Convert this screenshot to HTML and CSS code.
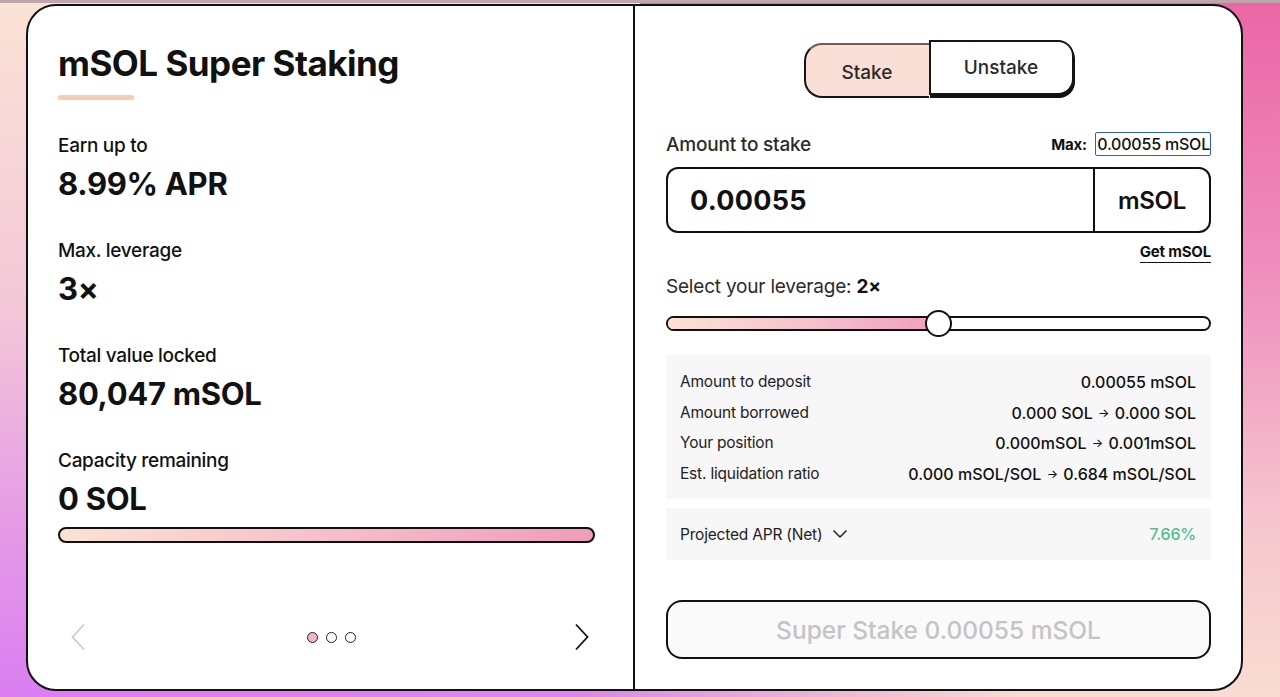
FILE: index.html
```html
<!DOCTYPE html>
<html lang="en">
<head>
  <meta charset="UTF-8">
  <title>mSOL Super Staking</title>
  <link rel="stylesheet" href="styles.css">
</head>
<body>
  <div class="card">
    <section class="info">
      <h1 class="title">mSOL Super Staking</h1>
      <div class="title-bar"></div>

      <div class="stat">
        <div class="stat-label">Earn up to</div>
        <div class="stat-value">8.99% APR</div>
      </div>
      <div class="stat">
        <div class="stat-label">Max. leverage</div>
        <div class="stat-value">3×</div>
      </div>
      <div class="stat">
        <div class="stat-label">Total value locked</div>
        <div class="stat-value">80,047 mSOL</div>
      </div>
      <div class="stat stat-last">
        <div class="stat-label">Capacity remaining</div>
        <div class="stat-value">0 SOL</div>
      </div>
      <div class="capacity"></div>

      <div class="pager">
        <svg class="chev chev-off" width="16" height="28" viewBox="0 0 16 28"><path d="M14 1.5 L2.5 14 L14 26.5" fill="none" stroke="currentColor" stroke-width="1.8"/></svg>
        <div class="dots">
          <span class="dot dot-on"></span>
          <span class="dot"></span>
          <span class="dot"></span>
        </div>
        <svg class="chev" width="16" height="28" viewBox="0 0 16 28"><path d="M2 1.5 L13.5 14 L2 26.5" fill="none" stroke="currentColor" stroke-width="1.8"/></svg>
      </div>
    </section>

    <section class="stake">
      <div class="toggle">
        <button class="tab tab-stake">Stake</button>
        <button class="tab tab-unstake">Unstake</button>
      </div>

      <div class="amount-head">
        <span>Amount to stake</span>
        <span class="max">Max: <span class="max-btn">0.00055 mSOL</span></span>
      </div>
      <div class="amount-box">
        <div class="amount-value">0.00055</div>
        <div class="amount-unit">mSOL</div>
      </div>
      <div class="get-row"><span class="get-link">Get mSOL</span></div>

      <div class="leverage">Select your leverage: <b>2×</b></div>
      <div class="slider">
        <div class="slider-fill" style="width: 50%;"></div>
        <div class="slider-thumb" style="left: 50%;"></div>
      </div>

      <div class="details">
        <div class="row"><span>Amount to deposit</span><span class="val">0.00055 mSOL</span></div>
        <div class="row"><span>Amount borrowed</span><span class="val">0.000 SOL <i>→</i> 0.000 SOL</span></div>
        <div class="row"><span>Your position</span><span class="val">0.000mSOL <i>→</i> 0.001mSOL</span></div>
        <div class="row"><span>Est. liquidation ratio</span><span class="val">0.000 mSOL/SOL <i>→</i> 0.684 mSOL/SOL</span></div>
      </div>

      <div class="apr">
        <span class="apr-label">Projected APR (Net)
          <svg width="16" height="10" viewBox="0 0 16 10"><path d="M1.5 1.5 L8 8 L14.5 1.5" fill="none" stroke="#222" stroke-width="1.5"/></svg>
        </span>
        <span class="apr-value">7.66%</span>
      </div>

      <button class="submit">Super Stake 0.00055 mSOL</button>
    </section>
  </div>
</body>
</html>
```

FILE: styles.css
```css
* {
  box-sizing: border-box;
}
body {
  margin: 0;
  padding: 4px 37px 6px 26px;
  height: 697px;
  overflow: hidden;
  font-family: "Inter", "Liberation Sans", sans-serif;
  color: #111;
  background:
    linear-gradient(#bfa6ad, #bfa6ad) top / 100% 3px no-repeat,
    linear-gradient(90deg, #da7ef2 0%, #dc86ea 45%, #eab0d8 62%, #f9dcd2 80%) bottom / 100% 8px no-repeat,
    linear-gradient(180deg, #fbe3d6 0%, #f3c6d8 45%, #e59be6 75%, #da7ef2 100%) left / 50% 100% no-repeat,
    linear-gradient(180deg, #eb66a6 0%, #ef8fbd 40%, #f6c6cf 75%, #f9dcd2 100%) right / 50% 100% no-repeat;
}
.card {
  height: 687px;
  background: #fff;
  border: 2px solid #111;
  border-radius: 30px;
  display: grid;
  grid-template-columns: 607px 1fr;
  grid-template-rows: 100%;
  overflow: hidden;
}

/* left column */
.info {
  border-right: 2px solid #111;
  padding: 36px 38px 32px 30px;
  display: flex;
  flex-direction: column;
}
.title {
  margin: 0;
  font-size: 35px;
  line-height: 42px;
  font-weight: 700;
  letter-spacing: -0.5px;
}
.title-bar {
  width: 76px;
  height: 5px;
  margin-top: 11px;
  border-radius: 3px;
  background: #f5cbbb;
}
.stat {
  margin-top: 34px;
}
.stat + .stat {
  margin-top: 37px;
}
.stat-label {
  font-size: 19px;
  line-height: 24px;
  font-weight: 500;
  letter-spacing: -0.3px;
}
.stat-value {
  margin-top: 8px;
  font-size: 31px;
  line-height: 36px;
  font-weight: 700;
  letter-spacing: -0.3px;
}
.capacity {
  margin-top: 10px;
  height: 16px;
  border: 2px solid #111;
  border-radius: 8px;
  background: linear-gradient(90deg, #fbe2d4, #f6bfcb 50%, #f09cba);
}
.pager {
  margin-top: auto;
  height: 40px;
  padding: 0 5px 0 12px;
  display: flex;
  align-items: center;
  justify-content: space-between;
}
.chev {
  color: #111;
}
.chev-off {
  color: #cbcbcb;
}
.dots {
  display: flex;
  gap: 8px;
  margin-left: 2px;
}
.dot {
  width: 11px;
  height: 11px;
  border: 1.5px solid #222;
  border-radius: 50%;
  background: #fff;
}
.dot-on {
  background: #f0b6c6;
}

/* right column */
.stake {
  padding: 34px 30px 30px 31px;
  display: flex;
  flex-direction: column;
  min-height: 0;
}
.toggle {
  display: flex;
  justify-content: center;
  align-items: flex-start;
  height: 58px;
  flex: none;
}
.tab {
  font-family: inherit;
  font-size: 19px;
  font-weight: 500;
  color: #2a2a2a;
  height: 55px;
  border: 2px solid #151515;
  padding: 0;
}
.tab-stake {
  width: 125px;
  margin-top: 3px;
  padding-top: 3px;
  border-right: none;
  border-radius: 18px 0 0 18px;
  background: #f9dfd5;
  border-top-color: #7a5a4e;
}
.tab-unstake {
  width: 145px;
  border-radius: 0 16px 16px 0;
  background: #fff;
  box-shadow: 1px 3px 0 #111;
}
.amount-head {
  margin-top: 34px;
  display: flex;
  justify-content: space-between;
  align-items: center;
  font-size: 19px;
  line-height: 24px;
  font-weight: 500;
  color: #2b2b2b;
  letter-spacing: -0.2px;
}
.max {
  font-size: 15px;
  font-weight: 700;
  color: #111;
}
.max-btn {
  margin-left: 5px;
  padding: 1px 0 1px 1px;
  font-size: 16px;
  font-weight: 500;
  letter-spacing: -0.2px;
  border: 1.5px solid #2f5fc4;
  border-radius: 2px;
}
.amount-box {
  margin-top: 10px;
  height: 66px;
  flex: none;
  border: 2px solid #111;
  border-radius: 12px;
  display: flex;
  align-items: stretch;
}
.amount-value {
  flex: 1;
  padding-left: 22px;
  display: flex;
  align-items: center;
  font-size: 27px;
  font-weight: 700;
  letter-spacing: 0.3px;
}
.amount-unit {
  width: 116px;
  border-left: 2px solid #111;
  display: flex;
  align-items: center;
  justify-content: center;
  font-size: 24px;
  font-weight: 600;
  letter-spacing: -0.3px;
}
.get-row {
  margin-top: 8px;
  height: 24px;
  display: flex;
  justify-content: flex-end;
  align-items: center;
}
.get-link {
  font-size: 15px;
  font-weight: 700;
  letter-spacing: -0.2px;
  line-height: 18px;
  border-bottom: 1px solid #111;
  padding-bottom: 1px;
}
.leverage {
  margin-top: 11px;
  font-size: 19px;
  line-height: 24px;
  color: #2b2b2b;
  letter-spacing: -0.2px;
}
.leverage b {
  color: #111;
}
.slider {
  position: relative;
  margin-top: 17px;
  height: 15px;
  flex: none;
  border: 2px solid #111;
  border-radius: 8px;
}
.slider-fill {
  height: 100%;
  border-radius: 6px 0 0 6px;
  background: linear-gradient(90deg, #fbe2d4, #f5c0cd 55%, #ef9fbd);
}
.slider-thumb {
  position: absolute;
  top: 50%;
  width: 27px;
  height: 27px;
  margin: -13.5px 0 0 -13.5px;
  border: 2px solid #111;
  border-radius: 50%;
  background: #fff;
}
.details {
  margin-top: 24px;
  height: 144px;
  flex: none;
  padding: 12px 15px 0 14px;
  background: #f7f7f7;
  font-size: 15.5px;
  color: #222;
}
.row {
  display: flex;
  justify-content: space-between;
  align-items: center;
  height: 30.5px;
  line-height: 20px;
  letter-spacing: -0.2px;
}
.val {
  font-size: 16px;
  font-weight: 500;
  color: #111;
  letter-spacing: 0;
}
.val i {
  font-style: normal;
  font-size: 12px;
  line-height: 1;
  vertical-align: 2px;
  padding: 0 1px;
}
.apr {
  margin-top: 9px;
  height: 52px;
  flex: none;
  padding: 0 15px 0 14px;
  background: #f7f7f7;
  display: flex;
  justify-content: space-between;
  align-items: center;
  font-size: 15.5px;
  letter-spacing: -0.2px;
}
.apr-label {
  display: flex;
  align-items: center;
  gap: 10px;
  color: #222;
}
.apr-value {
  font-size: 16px;
  color: #52bd8a;
  font-weight: 500;
}
.submit {
  margin-top: 40px;
  height: 59px;
  flex: none;
  border: 2px solid #111;
  border-radius: 16px;
  background: #fafafa;
  font-family: inherit;
  font-size: 24.5px;
  font-weight: 500;
  color: #c4c4c4;
  letter-spacing: 0;
}
```
